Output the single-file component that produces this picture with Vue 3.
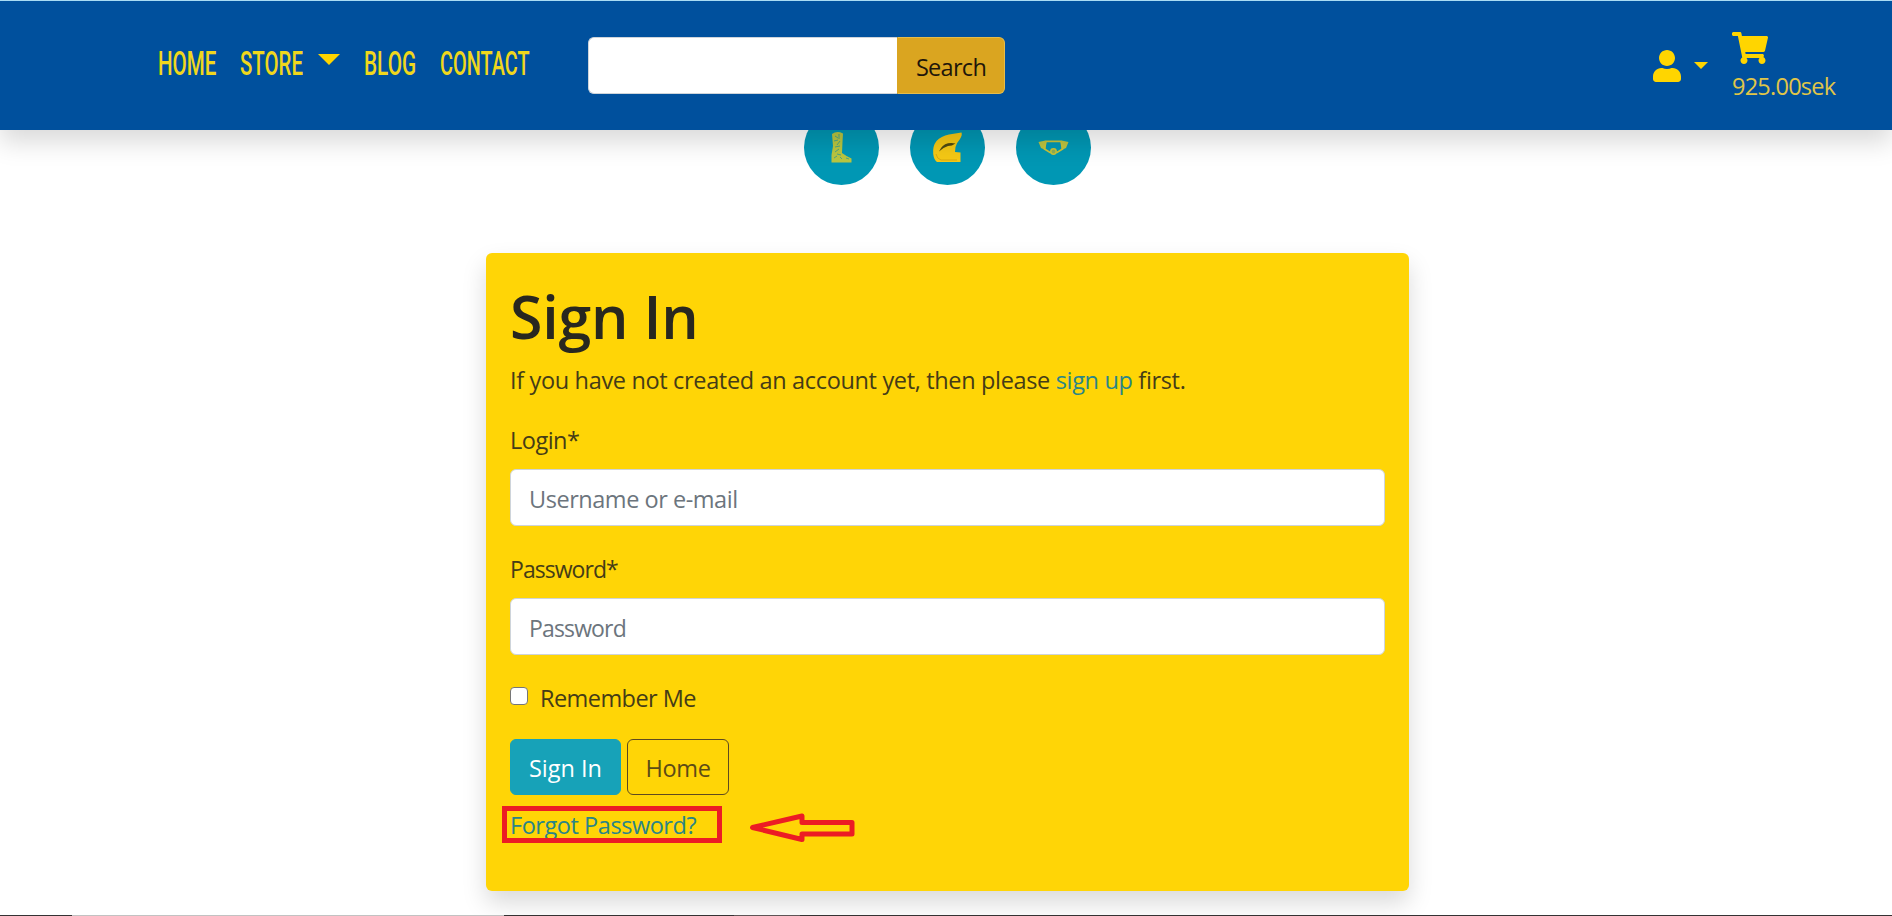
<script setup>
const links = [
  { text: 'HOME', cls: 'home' },
  { text: 'STORE', cls: 'store', caret: true },
  { text: 'BLOG', cls: 'blog' },
  { text: 'CONTACT', cls: 'contact' }
]
</script>

<template>
  <div class="page">
    <header class="navbar">
      <nav class="links">
        <a v-for="l in links" :key="l.text" class="link" :class="l.cls">
          <span class="label">{{ l.text }}</span>
          <i v-if="l.caret" class="caret big"></i>
        </a>
      </nav>
      <form class="search" @submit.prevent>
        <input type="text" aria-label="Search" />
        <button type="submit">Search</button>
      </form>
      <div class="account">
        <svg class="user" viewBox="0 0 448 512"><path d="M224 256c70.7 0 128-57.3 128-128S294.7 0 224 0 96 57.3 96 128s57.3 128 128 128zm89.6 32h-16.7c-22.2 10.2-46.9 16-72.9 16s-50.6-5.8-72.9-16h-16.7C60.2 288 0 348.2 0 422.4V464c0 26.5 21.5 48 48 48h352c26.5 0 48-21.5 48-48v-41.6c0-74.2-60.2-134.4-134.4-134.4z" /></svg>
        <i class="caret"></i>
      </div>
      <div class="cart">
        <svg viewBox="0 0 576 512"><path d="M528.12 301.319l47.273-208C578.806 78.301 567.391 64 551.99 64H159.208l-9.166-44.81C147.758 8.021 137.93 0 126.529 0H24C10.745 0 0 10.745 0 24v16c0 13.255 10.745 24 24 24h69.883l70.248 343.435C147.325 417.1 136 435.222 136 456c0 30.928 25.072 56 56 56s56-25.072 56-56c0-15.674-6.447-29.835-16.824-40h209.647C430.447 426.165 424 440.326 424 456c0 30.928 25.072 56 56 56s56-25.072 56-56c0-22.172-12.888-41.332-31.579-50.405l5.517-24.276c3.413-15.018-8.002-29.319-23.403-29.319H218.117l-6.545-32h293.145c11.206 0 20.92-7.754 23.403-18.681z" /></svg>
        <span>925.00sek</span>
      </div>
    </header>

    <main class="content">
      <div class="categories">
        <svg viewBox="0 0 75 75">
          <circle cx="37.5" cy="37.5" r="37.5" fill="#0097b4" />
          <path d="M28 24Q33 20.500 39 23.500L38.500 32L38 43Q42 46 47.500 48.500V52.500H27.500V45L29 36Z" fill="#b9c640" />
          <path d="M31 26l3 2M35 24v5M30 31l4-1M36 31l-3 4M31 37l5-1M35 39l-4 3M33 44l4 1M30 48l3-2M38 49l-2-2M42 48l3 1" stroke="#4fa583" stroke-width="1" fill="none" />
        </svg>
        <svg viewBox="0 0 75 75">
          <circle cx="37.500" cy="37.500" r="37.500" fill="#0097b4" />
          <path d="M51.500 22.500Q52.500 25 50 29Q46.500 33 45.500 37L45 42L50.500 42.500V52H27Q24 50 23.200 44Q22.500 36 26.500 31Q31 26 39 24.500Z" fill="#f6c915" />
          <path d="M29 41.500Q32 34.500 38 33.200Q42 32.500 45.500 33.500Q42 36 38 36Q33 37.500 29 41.500Z" fill="#4f4a12" />
          <path d="M26 44Q27 49 31 50H47" fill="none" stroke="#d9aa10" stroke-width="1" />
        </svg>
        <svg viewBox="0 0 75 75">
          <circle cx="37.500" cy="37.500" r="37.500" fill="#0097b4" />
          <path d="M22.500 32L29.500 30.500V40L25 38ZM52.500 32L45.500 30.500V40L50 38Z" fill="#bcc441" />
          <path d="M30 31.300H45L46.500 39L41 42.500H34L28.500 39Z" fill="none" stroke="#c9c438" stroke-width="1.700" />
          <circle cx="37.500" cy="41.500" r="2.700" fill="#8fae58" stroke="#c9c438" stroke-width="1.500" />
        </svg>
      </div>

      <section class="card">
        <h1>Sign In</h1>
        <p class="intro">If you have not created an account yet, then please <a>sign up</a> first.</p>
        <form @submit.prevent>
          <label class="lbl login">Login*</label>
          <input class="field" type="text" placeholder="Username or e-mail" />
          <label class="lbl pass">Password*</label>
          <input class="field pw" type="password" placeholder="Password" />
          <div class="remember">
            <i class="box"></i>
            <span>Remember Me</span>
          </div>
          <div class="actions">
            <button class="primary" type="submit">Sign In</button>
            <button class="outline" type="button">Home</button>
          </div>
          <div class="forgot">
            <a>Forgot Password?</a>
            <i class="marker"></i>
            <svg class="arrow" viewBox="0 0 110 32"><path d="M4.500 15.500L54 4V10.500H104V22H54V27.500Z" /></svg>
          </div>
        </form>
      </section>
    </main>

    <div class="edge"><i></i><i class="light"></i><i></i><i class="mid"></i><i></i></div>
  </div>
</template>

<style>
body { margin: 0; overflow: hidden; background: #fff; }
</style>

<style scoped>
.page {
  width: 1892px;
  height: 916px;
  overflow: hidden;
  display: flex;
  flex-direction: column;
  font: 23.5px/36px "Open Sans", sans-serif;
  color: #212529;
}
.page * { box-sizing: border-box; }
.navbar {
  position: relative;
  z-index: 2;
  flex: none;
  display: flex;
  align-items: flex-start;
  height: 130px;
  border-top: 1px solid #a9dcf4;
  background: #00509d;
  box-shadow: 0 12px 24px rgba(0, 0, 0, .15);
  color: #ffd500;
}
.links { display: flex; width: 588px; padding: 42px 0 0 158px; }
.link { display: flex; font: 500 34px/40px Roboto, sans-serif; color: #f0d71c; }
.label { transform-origin: 0 50%; white-space: nowrap; }
.home { width: 82px; }
.store { width: 124px; }
.blog { width: 76px; }
.contact { width: 92px; }
.home .label { width: 82px; transform: scaleX(.605); }
.store .label { width: 78px; transform: scaleX(.6); }
.blog .label { transform: scaleX(.61); }
.contact .label { transform: scaleX(.585); }
.caret {
  flex: none;
  border: 7px solid transparent;
  border-top-color: #ffd500;
  border-bottom: 0;
  height: 0;
}
.caret.big { border-width: 11px 11px 0; margin-top: 11px; }
.search { display: flex; width: 417px; height: 57px; margin-top: 36px; }
.search input {
  width: 309px;
  border: 1px solid #ced4da;
  border-right-color: #fff;
  border-radius: 6px 0 0 6px;
  background: #fff;
  padding: 0;
}
.search button {
  width: 108px;
  border: 1px solid #e6bc4a;
  border-left-color: #daa520;
  border-radius: 0 6px 6px 0;
  background: #daa520;
  color: #1f160a;
  font: inherit;
  letter-spacing: -.7px;
  padding: 2px 0 0;
}
.account { display: flex; margin: 49px 0 0 648px; width: 79px; }
.user { width: 28px; height: 32px; fill: #ffd500; }
.account .caret { margin: 12px 0 0 13px; }
.cart { display: flex; flex-direction: column; padding-top: 31px; color: #e0c648; letter-spacing: -.75px; }
.cart svg { width: 36px; height: 32px; fill: #ffd500; }
.cart span { margin-top: 4px; }

.content {
  flex: 1;
  display: flex;
  flex-direction: column;
  align-items: center;
  min-height: 0;
  padding-left: 3px;
}
.categories { display: flex; gap: 31px; margin-top: -20px; }
.categories svg { width: 75px; height: 75px; display: block; }
.card {
  flex: none;
  width: 923px;
  height: 638px;
  margin-top: 68px;
  padding: 24px;
  border-radius: 6px;
  background: #ffd506;
  box-shadow: 0 12px 24px rgba(0, 0, 0, .15);
  color: #453c17;
}
h1 {
  margin: 0 0 10px;
  padding-top: 3px;
  font-size: 59px;
  line-height: 72px;
  font-weight: 600;
  letter-spacing: -.2px;
  color: #28271f;
}
.intro { margin: 0 0 23px; letter-spacing: -.34px; }
a { color: #2a8488; }
.intro a { color: #2b8588; }
form { margin: 0; }
.lbl { display: block; padding-top: 1px; margin-bottom: 11px; letter-spacing: -.5px; }
.pass { font-size: 23px; letter-spacing: -.95px; }
.field {
  display: block;
  width: 875px;
  height: 57px;
  margin-bottom: 24px;
  padding: 2px 18px 0;
  border: 1px solid #ced4da;
  border-radius: 6px;
  background: #fff;
  font: inherit;
  letter-spacing: -.46px;
}
.field::placeholder { color: #6c757d; opacity: 1; }
.pw { font-size: 23px; letter-spacing: -.85px; }
.remember { display: flex; height: 36px; margin-bottom: 24px; letter-spacing: -.56px; }
.remember span { padding-top: 1px; }
.box {
  width: 18px;
  height: 18px;
  margin: 8px 12px 0 0;
  border: 1px solid #767676;
  border-radius: 4px;
  background: #fff;
}
.actions { display: flex; gap: 6px; }
.actions button {
  height: 56px;
  padding: 1px 0 0;
  border-radius: 6px;
  font: inherit;
}
.primary { width: 111px; border: 1px solid #17a2b8; background: #17a2b8; color: #fff; }
.actions .primary { font-weight: 500; }
.outline { width: 102px; border: 1px solid #5e4a20; background: transparent; color: #5c4b16; letter-spacing: -.3px; }
.forgot { position: relative; margin-top: 12px; letter-spacing: -.45px; }
.marker {
  position: absolute;
  left: -8px;
  top: -1px;
  width: 220px;
  height: 37px;
  border: 5px solid #ec1c24;
}
.arrow {
  position: absolute;
  left: 238px;
  top: 5px;
  width: 110px;
  height: 32px;
  fill: none;
  stroke: #ec1c24;
  stroke-width: 5;
  stroke-linejoin: round;
}
.edge { display: flex; flex: none; height: 1px; position: relative; }
.edge i { background: #353233; flex: none; width: 72px; }
.edge .light { background: #c2c2c2; width: 432px; }
.edge i:nth-child(3) { width: 230px; }
.edge .mid { background: #5f5556; width: 66px; }
.edge i:last-child { flex: 1; }
</style>
